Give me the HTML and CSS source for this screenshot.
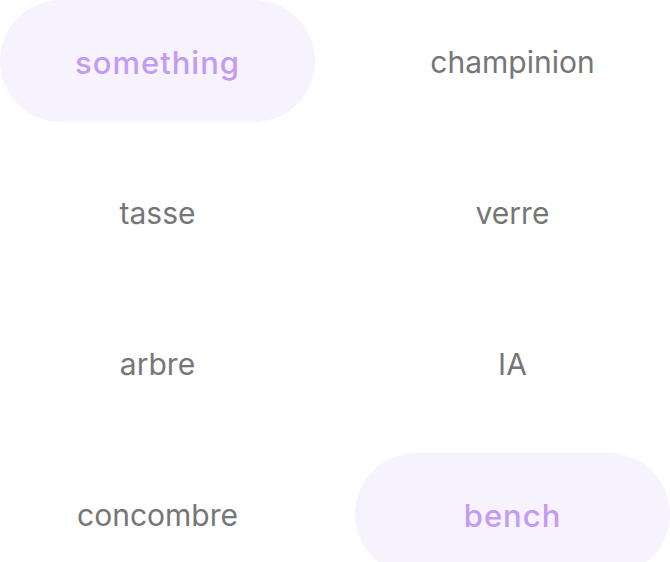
FILE: index.html
```html
<!DOCTYPE html>
<html>
<head>
<meta charset="utf-8">
<link rel="stylesheet" href="styles.css">
</head>
<body>
<div class="grid">
  <div class="item selected">something</div>
  <div class="item">champinion</div>
  <div class="item">tasse</div>
  <div class="item">verre</div>
  <div class="item">arbre</div>
  <div class="item">IA</div>
  <div class="item">concombre</div>
  <div class="item selected">bench</div>
</div>
</body>
</html>
```
FILE: styles.css
```css
html, body {
  margin: 0;
  padding: 0;
  background: #ffffff;
}
.grid {
  display: grid;
  grid-template-columns: 315px 315px;
  grid-auto-rows: 122px;
  column-gap: 40px;
  row-gap: 29px;
  width: 670px;
}
.item {
  display: flex;
  align-items: center;
  justify-content: center;
  border-radius: 61px;
  font-family: "Inter", "Noto Sans", sans-serif;
  font-size: 30px;
  font-weight: 400;
  color: #767676;
  padding-top: 2px;
  box-sizing: border-box;
}
.item.selected {
  background: #f6f2fe;
  color: #c39bf2;
  font-size: 31px;
  font-weight: 500;
  letter-spacing: 1px;
}
```
